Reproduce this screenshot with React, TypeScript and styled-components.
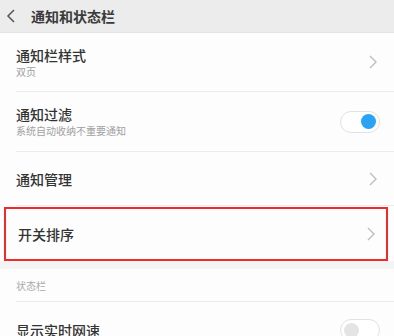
import styled, { createGlobalStyle } from "styled-components";

/* ================= GLOBAL ================= */

const GlobalStyle = createGlobalStyle`
  html, body {
    margin: 0;
    padding: 0;
    background: #ffffff;
    font-family: "Noto Sans CJK SC", "Noto Sans", sans-serif;
  }
`;

/* ================= STYLES ================= */

const Page = styled.div`
  width: 394px;
  height: 336px;
  overflow: hidden;
  background: #fdfdfd;
`;

const Header = styled.div`
  height: 32px;
  background: #ececec;
  display: flex;
  align-items: center;
  padding-left: 6px;
  gap: 15px;
  border-bottom: 1px solid #e4e4e4;
`;

const HeaderTitle = styled.div`
  font-size: 14px;
  font-weight: 600;
  color: #3a3a3a;
`;

const Row = styled.div<{ $h: number; $divider?: boolean }>`
  height: ${(p) => p.$h}px;
  margin-left: 16px;
  padding-right: 16px;
  display: flex;
  align-items: center;
  justify-content: space-between;
  border-bottom: ${(p) => (p.$divider ? "1px solid #ebebeb" : "none")};
  box-sizing: border-box;
`;

const TextCol = styled.div`
  display: flex;
  flex-direction: column;
  gap: 1px;
`;

const Title = styled.div`
  font-size: 14px;
  font-weight: 500;
  color: #333333;
  line-height: 18px;
`;

const Sub = styled.div`
  font-size: 10px;
  color: #a0a0a0;
  line-height: 14px;
`;

const Highlight = styled.div`
  margin: 1px 6px 0 4px;
  border: 2px solid #ee2a2a;
  height: 54px;
  box-sizing: border-box;
  display: flex;
  align-items: center;
  justify-content: space-between;
  padding: 0 10px 0 12px;
`;

const Band = styled.div`
  height: 8px;
  background: #f4f4f4;
`;

const SectionLabel = styled.div`
  height: 32px;
  margin-left: 16px;
  display: flex;
  align-items: center;
  font-size: 10px;
  color: #aaaaaa;
  border-bottom: 1px solid #ebebeb;
`;

const Track = styled.div<{ $on: boolean }>`
  width: 40px;
  height: 22px;
  border-radius: 11px;
  border: 1px solid #e2e2e2;
  background: #ffffff;
  box-sizing: border-box;
  display: flex;
  align-items: center;
  justify-content: ${(p) => (p.$on ? "flex-end" : "flex-start")};
  padding: 0 3px;
  margin-right: -2px;
`;

const Knob = styled.div<{ $on: boolean }>`
  width: 15px;
  height: 15px;
  border-radius: 50%;
  background: ${(p) => (p.$on ? "#2aa3f4" : "#e4e4e4")};
`;

/* ================= PARTS ================= */

const Chevron = () => (
  <svg width="10" height="16" viewBox="0 0 10 16">
    <path d="M2 2 L8 8 L2 14" fill="none" stroke="#bdbdbd" strokeWidth="1.4" />
  </svg>
);

const Back = () => (
  <svg width="10" height="16" viewBox="0 0 10 16">
    <path d="M8 2 L2 8 L8 14" fill="none" stroke="#555555" strokeWidth="1.5" />
  </svg>
);

const Toggle = ({ on }: { on: boolean }) => (
  <Track $on={on}>
    <Knob $on={on} />
  </Track>
);

/* ================= COMPONENT ================= */

export default function App() {
  return (
    <>
      <GlobalStyle />
      <Page>
        <Header>
          <Back />
          <HeaderTitle>通知和状态栏</HeaderTitle>
        </Header>

        <Row $h={59} $divider>
          <TextCol>
            <Title>通知栏样式</Title>
            <Sub>双页</Sub>
          </TextCol>
          <Chevron />
        </Row>

        <Row $h={60} $divider>
          <TextCol>
            <Title>通知过滤</Title>
            <Sub>系统自动收纳不重要通知</Sub>
          </TextCol>
          <Toggle on />
        </Row>

        <Row $h={54} $divider>
          <Title>通知管理</Title>
          <Chevron />
        </Row>

        <Highlight>
          <Title>开关排序</Title>
          <Chevron />
        </Highlight>

        <Band />

        <SectionLabel>状态栏</SectionLabel>

        <Row $h={56}>
          <Title>显示实时网速</Title>
          <Toggle on={false} />
        </Row>
      </Page>
    </>
  );
}
